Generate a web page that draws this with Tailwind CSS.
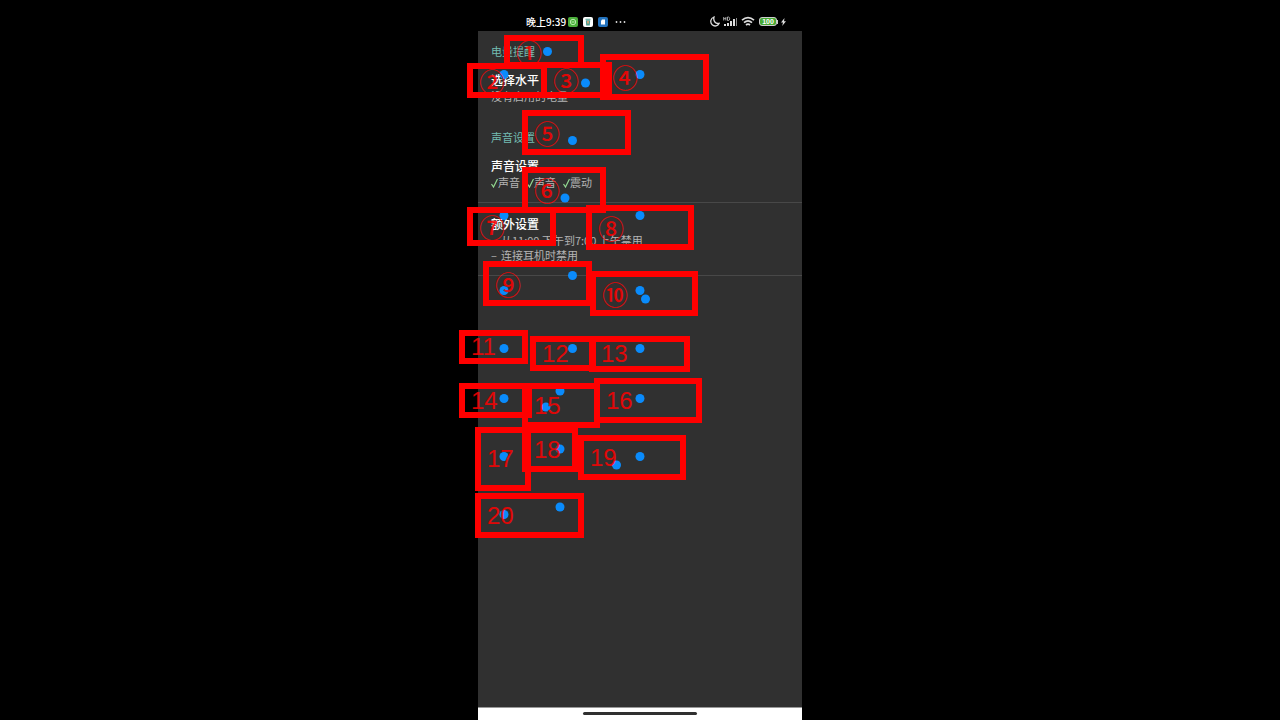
<!DOCTYPE html>
<html lang="zh-CN">
<head>
<meta charset="utf-8">
<meta name="viewport" content="width=device-width, initial-scale=1">
<title>电量提醒</title>
<script src="https://cdn.jsdelivr.net/npm/@tailwindcss/browser@4"></script>
</head>
<body class="bg-black font-['Noto_Sans_CJK_SC',sans-serif]">
<div class="relative mx-auto flex min-h-screen w-full max-w-[324px] flex-col bg-[#303030]">

  <header class="flex h-[31px] items-center bg-black pt-3 pr-4 pl-12 text-white">
    <span class="text-[10px] leading-4 font-medium">晚上9:39</span>
    <div class="ml-[2px] flex items-center gap-[5px]">
      <svg class="h-[10px] w-[10px]" viewBox="0 0 10 10"><rect width="10" height="10" rx="2" fill="#4caf3c"/><circle cx="5" cy="5" r="2.7" fill="none" stroke="#b8ecae"/><path d="M3.500 5h3" stroke="#b8ecae"/></svg>
      <svg class="h-[10px] w-[10px]" viewBox="0 0 10 10"><rect width="10" height="10" rx="2" fill="#fff"/><path d="M2.500 1.800h5v1h-5zM2.800 3.200h4.400L6.800 8.500H3.200z" fill="#4e9e91"/><path d="M4 4h2v2.500H4z" fill="#c9a37b"/></svg>
      <svg class="h-[10px] w-[10px]" viewBox="0 0 10 10"><rect width="10" height="10" rx="2" fill="#2372bd"/><path d="M3 4l1-1.500h3v5H3z" fill="#fff"/></svg>
      <svg class="ml-[2px] h-[10px] w-3" viewBox="0 0 12 10" fill="#ddd"><circle cx="1.500" cy="5" r=".9"/><circle cx="5.500" cy="5" r=".9"/><circle cx="9.500" cy="5" r=".9"/></svg>
    </div>
    <div class="ml-auto flex items-center gap-1">
      <svg class="h-[11px] w-[10px]" viewBox="0 0 10 11" fill="none" stroke="#ddd" stroke-width="1.300"><path d="M4 1C.5 2-.2 6.500 2.200 8.800 4.500 11 8 10 9.200 7.300 5.500 8.300 3 5 4 1z"/></svg>
      <svg class="-ml-px h-[11px] w-[14px]" viewBox="0 0 14 11"><path d="M.7 1v3.500M2.900 1v3.500M.7 2.700h2.200M4.500 1v3.500h1c1.600 0 1.600-3.500 0-3.500z" fill="none" stroke="#ccc" stroke-width=".8"/><path d="M1 8h2v2H1zM4 7h2v3H4zM7 5h2v5H7zM10 3h2v7h-2z" fill="#ddd"/><path d="M13 2h1v8h-1z" fill="#888"/></svg>
      <svg class="h-[11px] w-[14px]" viewBox="0 0 14 11" fill="none" stroke="#ddd" stroke-width="1.700"><path d="M1 4.200Q7-.8 13 4.200M3 6.700Q7 3.200 11 6.700M5 9Q7 7.400 9 9"/></svg>
      <div class="flex items-center gap-[3px]">
        <div class="flex items-center">
          <span class="flex h-[9px] w-[18px] items-center justify-center rounded-[3px] border border-[#ccc] bg-[#45a832] font-['Liberation_Sans',sans-serif] text-[7px] leading-none font-bold">100</span>
          <span class="h-1 w-px bg-[#ccc]"></span>
        </div>
        <svg class="h-2 w-[5px]" viewBox="0 0 5 8" fill="#ddd"><path d="M3.500 0L0 4.500h2L1.200 8 5 3.300H3z"/></svg>
      </div>
    </div>
  </header>

  <main class="flex grow flex-col pt-3 text-[11px] leading-[15px] text-[#b4b4b4]">
    <section>
      <h2 class="px-[13px] leading-4 text-[#74bdb2]">电量提醒</h2>
      <button type="button" class="mt-[13px] block w-full px-[13px] text-left">
        <span class="mb-px block text-[12px] leading-4 font-medium text-white">选择水平</span>
        <span class="block">没有启用的电量</span>
      </button>
    </section>
    <section class="mt-[25px]">
      <h2 class="px-[13px] leading-4 text-[#74bdb2]">声音设置</h2>
      <button type="button" class="block w-full border-b border-[#484848] px-[13px] pt-[13px] pb-3 text-left">
        <span class="mb-px block text-[12px] leading-4 font-medium text-white">声音设置</span>
        <span class="flex gap-[7px]">
          <span class="flex items-center"><svg class="h-[10px] w-[7px]" viewBox="0 0 7 10" fill="none" stroke="#93da91" stroke-width="1.200"><path d="M.5 6L2.500 9 6.500 1"/></svg>声音</span>
          <span class="flex items-center"><svg class="h-[10px] w-[7px]" viewBox="0 0 7 10" fill="none" stroke="#93da91" stroke-width="1.200"><path d="M.5 6L2.500 9 6.500 1"/></svg>声音</span>
          <span class="flex items-center"><svg class="h-[10px] w-[7px]" viewBox="0 0 7 10" fill="none" stroke="#93da91" stroke-width="1.200"><path d="M.5 6L2.500 9 6.500 1"/></svg>震动</span>
        </span>
      </button>
      <button type="button" class="block w-full border-b border-[#484848] px-[13px] pt-[13px] pb-3 text-left">
        <span class="mb-px block text-[12px] leading-4 font-medium text-white">额外设置</span>
        <span class="flex"><span class="w-[10px]">–</span>从11:00 下午到7:00 上午禁用</span>
        <span class="flex"><span class="w-[10px]">–</span>连接耳机时禁用</span>
      </button>
    </section>
  </main>

  <footer class="flex h-[13px] justify-center border-t border-[#999] bg-white pt-1">
    <div class="h-[3px] w-[114px] rounded-full bg-[#303030]"></div>
  </footer>

  <!-- Touch points, positioned on the screen's canvas -->
  <svg class="pointer-events-none absolute top-0 left-0 h-[720px] w-[324px]" viewBox="478 0 324 720" fill="#0a8bfb" aria-hidden="true">
    <circle cx="547.500" cy="51.500" r="4.500"/><circle cx="504" cy="74.500" r="4.500"/><circle cx="585.500" cy="83" r="4.500"/><circle cx="640" cy="74.500" r="4.500"/>
    <circle cx="572.500" cy="140.500" r="4.500"/><circle cx="565" cy="198" r="4.500"/><circle cx="504" cy="215.500" r="4.500"/><circle cx="640" cy="215.500" r="4.500"/>
    <circle cx="572.500" cy="275.500" r="4.500"/><circle cx="504" cy="290.500" r="4.500"/><circle cx="640" cy="290.500" r="4.500"/><circle cx="645.500" cy="299" r="4.500"/>
    <circle cx="504" cy="348.500" r="4.500"/><circle cx="572.500" cy="348.500" r="4.500"/><circle cx="640" cy="348.500" r="4.500"/>
    <circle cx="504" cy="398.500" r="4.500"/><circle cx="560" cy="391" r="4.500"/><circle cx="546" cy="407" r="4.500"/><circle cx="640" cy="398.500" r="4.500"/>
    <circle cx="504" cy="456.500" r="4.500"/><circle cx="560" cy="449" r="4.500"/><circle cx="616.500" cy="465" r="4.500"/><circle cx="640" cy="456.500" r="4.500"/>
    <circle cx="504" cy="514.500" r="4.500"/><circle cx="560" cy="507" r="4.500"/>
  </svg>

  <!-- Numbered regions -->
  <div class="pointer-events-none absolute inset-0 font-['Noto_Sans_CJK_SC',sans-serif] text-[26px] leading-none font-medium text-[#ff0000]/85 *:absolute *:flex *:items-center *:border-6 *:border-[#ff0000] *:pl-[6px]">
    <div class="top-[35px] left-[26px] h-[33px] w-[80px]">①</div>
    <div class="top-[63px] left-[-11px] h-[35px] w-[80px]">②</div>
    <div class="top-[62px] left-[63px] h-[36px] w-[71px]">③</div>
    <div class="top-[54px] left-[122px] h-[46px] w-[109px]">④</div>
    <div class="top-[110px] left-[44px] h-[45px] w-[109px]">⑤</div>
    <div class="top-[167px] left-[44px] h-[46px] w-[84px]">⑥</div>
    <div class="top-[207px] left-[-11px] h-[39px] w-[89px]">⑦</div>
    <div class="top-[205px] left-[108px] h-[45px] w-[108px]">⑧</div>
    <div class="top-[261px] left-[5px] h-[45px] w-[109px]">⑨</div>
    <div class="top-[271px] left-[112px] h-[45px] w-[108px]">⑩</div>
  </div>
  <div class="pointer-events-none absolute inset-0 font-['Liberation_Sans',sans-serif] text-[24px] leading-none text-[#ff0000]/85 *:absolute *:flex *:items-center *:border-6 *:border-[#ff0000] *:pl-[6px]">
    <div class="top-[330px] left-[-19px] h-[34px] w-[69px]">11</div>
    <div class="top-[336px] left-[52px] h-[35px] w-[66px]">12</div>
    <div class="top-[336px] left-[111px] h-[36px] w-[101px]">13</div>
    <div class="top-[383px] left-[-19px] h-[35px] w-[73px]">14</div>
    <div class="top-[383px] left-[44px] h-[45px] w-[78px]">15</div>
    <div class="top-[378px] left-[116px] h-[45px] w-[108px]">16</div>
    <div class="top-[427px] left-[-3px] h-[64px] w-[56px]">17</div>
    <div class="top-[427px] left-[44px] h-[45px] w-[56px]">18</div>
    <div class="top-[435px] left-[100px] h-[45px] w-[108px]">19</div>
    <div class="top-[493px] left-[-3px] h-[45px] w-[109px]">20</div>
  </div>
</div>
</body>
</html>
